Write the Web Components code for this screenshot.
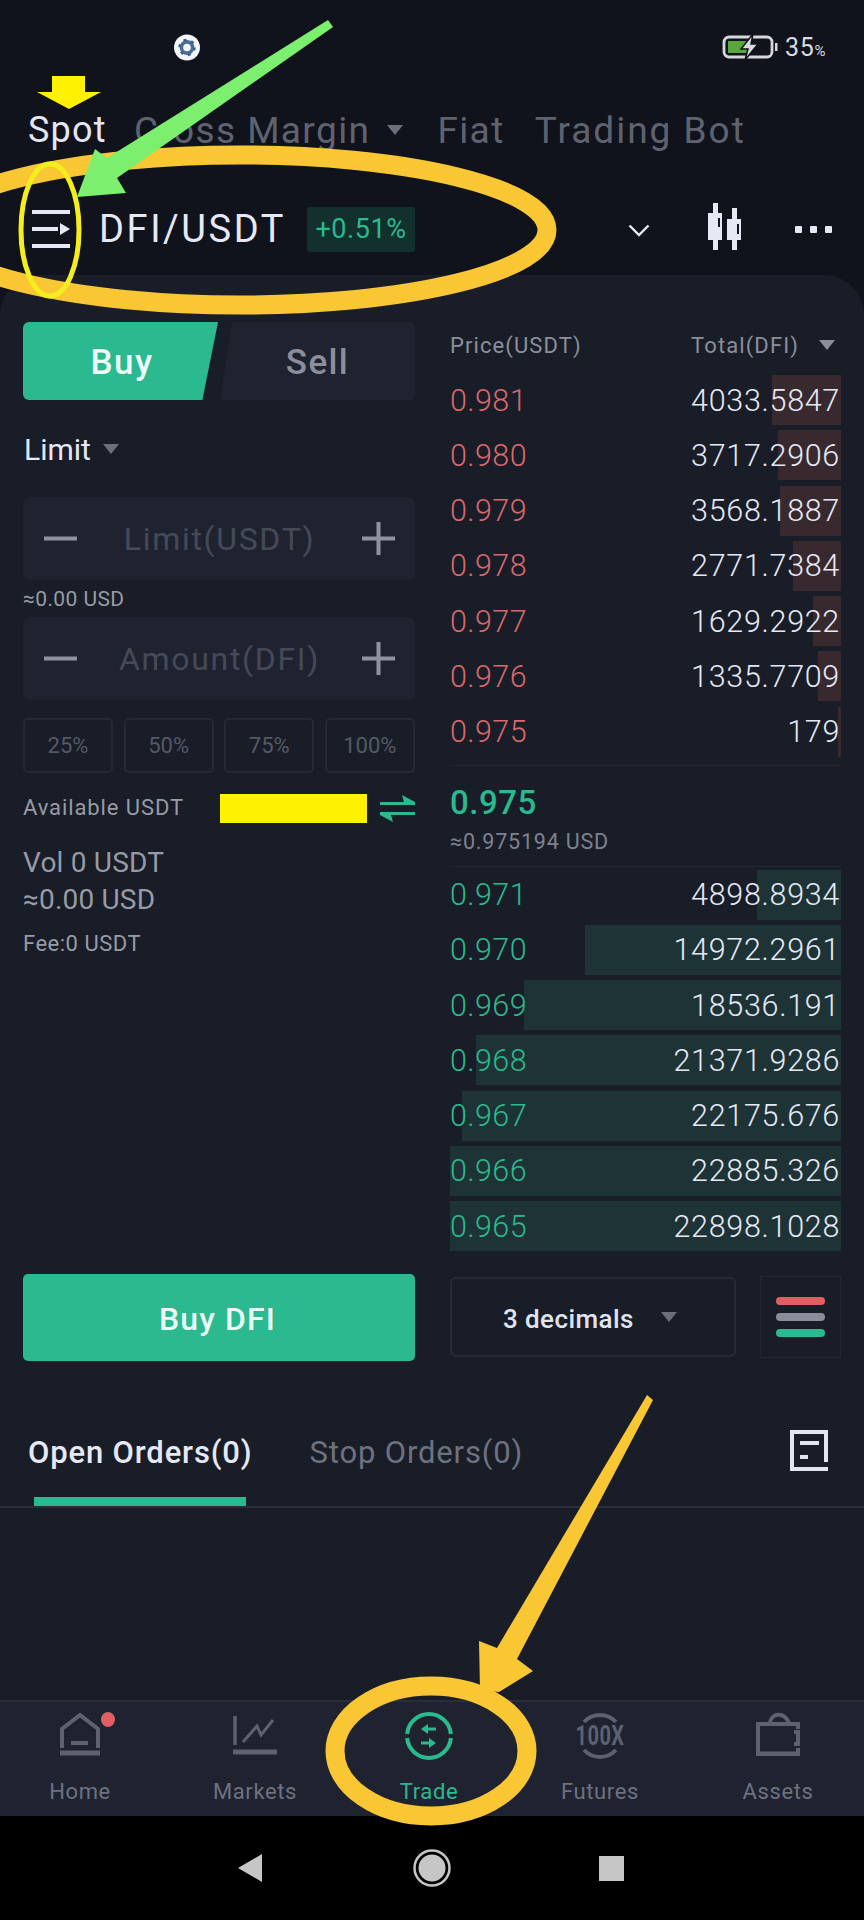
<!DOCTYPE html>
<html>
<head>
<meta charset="utf-8">
<title>Trade</title>
<style>
    html, body { margin: 0; padding: 0; background: #10131c; }
    body { width: 864px; height: 1920px; position: relative; overflow: hidden; font-family: Roboto, "Liberation Sans", sans-serif; }
    #app { display: flex; flex-direction: column; height: 1920px; }
</style>
</head>
<body>
<div id="app">
    <status-bar></status-bar>
    <market-tabs></market-tabs>
    <pair-header></pair-header>
    <trade-panel>
        <order-form slot="form"></order-form>
        <order-book slot="book"></order-book>
        <orders-tabs slot="orders"></orders-tabs>
    </trade-panel>
    <bottom-nav></bottom-nav>
    <system-nav></system-nav>
</div>
<note-layer></note-layer>

<script>
class StatusBar extends HTMLElement {
    constructor() {
        super();
        this.attachShadow({ mode: "open" });
        this.shadowRoot.innerHTML = `
        <style>
            :host { display: flex; align-items: center; height: 94px; padding: 0 38px 0 174px; box-sizing: border-box; color: #d9dbe0; flex: none; }
            .spacer { flex: 1; }
            .pct { font-size: 25px; margin-left: 6px; letter-spacing: 0.6px; }
            .pct small { font-size: 15px; }
            svg { display: block; }
        </style>
        <svg width="26" height="27" viewBox="0 0 26 27">
            <circle cx="13" cy="13.5" r="13" fill="#f4f6fa"/>
            <circle cx="13" cy="13.5" r="5.6" fill="none" stroke="#4a6f96" stroke-width="3.6"/>
            <circle cx="13" cy="13.5" r="7.6" fill="none" stroke="#3d5f85" stroke-width="2.2" stroke-dasharray="3 5"/>
        </svg>
        <div class="spacer"></div>
        <svg width="57" height="26" viewBox="0 0 57 26">
            <rect x="2" y="3" width="48" height="20" rx="5" fill="none" stroke="#d5d7da" stroke-width="2.8"/>
            <rect x="6" y="7" width="21" height="12" fill="#58a83a"/>
            <path d="M31 0 L19 15 H26 L23 26 L36 10 H29 Z" fill="#d9dbde" stroke="#10131c" stroke-width="1.5"/>
            <rect x="53" y="9" width="2.5" height="8" fill="#d5d7da"/>
        </svg>
        <div class="pct">35<small>%</small></div>
        `;
    }
}
customElements.define("status-bar", StatusBar);

class MarketTabs extends HTMLElement {
    constructor() {
        super();
        this.attachShadow({ mode: "open" });
        this.shadowRoot.innerHTML = `
        <style>
            :host { display: flex; align-items: center; height: 72px; padding-left: 28px; font-size: 37px; color: #5f6371; flex: none; white-space: nowrap; letter-spacing: 1.4px; }
            .on { color: #e4e7f1; width: 106px; font-size: 36px; letter-spacing: 1.2px; }
            .caret { width: 0; height: 0; border: 8px solid transparent; border-top: 10px solid #6b6f7c; border-bottom: 0; margin: 0 34px 0 17px; }
            .bot { margin-left: 30px; letter-spacing: 2px; }
        </style>
        <span class="on">Spot</span><span>Cross Margin</span><span class="caret"></span><span>Fiat</span><span class="bot">Trading Bot</span>
        `;
    }
}
customElements.define("market-tabs", MarketTabs);

class PairHeader extends HTMLElement {
    constructor() {
        super();
        this.attachShadow({ mode: "open" });
        this.shadowRoot.innerHTML = `
        <style>
            :host { display: flex; align-items: center; height: 109px; padding: 17px 32px 0 32px; box-sizing: border-box; color: #e6e9f5; flex: none; }
            .pair { font-size: 38px; margin-left: 29px; letter-spacing: 2.6px; }
            .badge { margin-left: 21px; width: 108px; height: 45px; background: #12302e; color: #2bb98f; font-size: 27px; letter-spacing: 0.6px; border-radius: 3px; display: flex; align-items: center; justify-content: center; }
            .spacer { flex: 1; }
            .dots { display: flex; gap: 8px; margin-left: 54px; }
            .dots i { width: 7px; height: 7px; background: #e6e9f5; border-radius: 1px; }
            svg { display: block; }
        </style>
        <svg width="38" height="40" viewBox="0 0 38 40" fill="#e6e9f5" style="margin-top:2px">
            <rect x="0" y="0" width="38" height="4"/>
            <rect x="0" y="17" width="26" height="4"/>
            <path d="M28 13 L38 19 L28 25 Z"/>
            <rect x="0" y="34" width="38" height="4"/>
        </svg>
        <div class="pair">DFI/USDT</div>
        <div class="badge">+0.51%</div>
        <div class="spacer"></div>
        <svg width="22" height="13" viewBox="0 0 22 13" style="margin-right:57px;margin-top:3px">
            <path d="M1.5 1.5 L11 11 L20.5 1.5" fill="none" stroke="#e6e9f5" stroke-width="2.4"/>
        </svg>
        <svg width="34" height="48" viewBox="0 0 34 48" fill="#e6e9f5" style="margin-bottom:5px">
            <rect x="6" y="0" width="5" height="47"/>
            <rect x="25" y="5" width="5" height="42"/>
            <path d="M1 10 H15 V37 H1 Z M6 15 V28 H10 V24 H13 V15 Z" fill-rule="evenodd"/>
            <path d="M20 16 H34 V37 H20 Z M25 21 V28 H29 V31 H32 V21 Z" fill-rule="evenodd"/>
        </svg>
        <div class="dots"><i></i><i></i><i></i></div>
        `;
    }
}
customElements.define("pair-header", PairHeader);

class TradePanel extends HTMLElement {
    constructor() {
        super();
        this.attachShadow({ mode: "open" });
        this.shadowRoot.innerHTML = `
        <style>
            :host { display: flex; flex-direction: column; height: 1425px; background: #191d28; border-radius: 40px 40px 0 0; flex: none; }
            .cols { display: grid; grid-template-columns: 392px 391px; gap: 35px; padding: 47px 23px 0; height: 1039px; }
        </style>
        <div class="cols">
            <slot name="form"></slot>
            <slot name="book"></slot>
        </div>
        <slot name="orders"></slot>
        `;
    }
}
customElements.define("trade-panel", TradePanel);

class StepInput extends HTMLElement {
    constructor() {
        super();
        this.attachShadow({ mode: "open" });
        this.shadowRoot.innerHTML = `
        <style>
            :host { display: flex; align-items: center; justify-content: space-between; height: 83px; background: #1f2330; border-radius: 7px; padding: 0 20px 0 21px; box-sizing: border-box; }
            .ph { font-size: 32px; color: #454a58; letter-spacing: 1.7px; }
            svg { display: block; }
        </style>
        <svg width="33" height="33" viewBox="0 0 33 33"><rect x="0" y="14.5" width="33" height="4" fill="#8f92a0"/></svg>
        <span class="ph"><slot></slot></span>
        <svg width="33" height="33" viewBox="0 0 33 33" fill="#8f92a0"><rect x="0" y="14.5" width="33" height="4"/><rect x="14.5" y="0" width="4" height="33"/></svg>
        `;
    }
}
customElements.define("step-input", StepInput);

class OrderForm extends HTMLElement {
    constructor() {
        super();
        this.attachShadow({ mode: "open" });
        this.shadowRoot.innerHTML = `
        <style>
            :host { display: flex; flex-direction: column; height: 100%; color: #979ba6; }
            .side { display: grid; grid-template-columns: 195px 195px; grid-template-rows: 78px; gap: 2px; height: 78px; font-size: 35px; text-align: center; letter-spacing: 1.4px; }
            .side div { display: flex; align-items: center; justify-content: center; padding-top: 3px; box-sizing: border-box; }
            .side .buy { background: #2bb98f; color: #eefaf6; border-radius: 6px 0 0 6px; clip-path: polygon(0 0, 100% 0, 92% 100%, 0 100%); padding-left: 3px; font-weight: 500; }
            .side .sell { background: #1f2330; color: #8b8f9b; border-radius: 0 6px 6px 0; clip-path: polygon(12px 0, 100% 0, 100% 100%, 0 100%); font-weight: 500; }
            .type { display: flex; align-items: center; height: 40px; margin-top: 29px; margin-bottom: 28px; padding-left: 1px; font-size: 30px; color: #e6e9f5; }
            .caret { width: 0; height: 0; border: 8px solid transparent; border-top: 10px solid #6b6f7c; border-bottom: 0; margin-left: 12px; }
            .usd { font-size: 21px; height: 37px; line-height: 39px; letter-spacing: 0.4px; }
            .pcts { display: grid; grid-template-columns: repeat(4, 90px); gap: 10.6px; margin-top: 18px; }
            .pcts div { height: 55px; box-sizing: border-box; border: 2px solid #252935; border-radius: 5px; font-size: 22px; color: #545966; display: flex; align-items: center; justify-content: center; }
            .avail { display: flex; align-items: center; height: 30px; margin-top: 20px; font-size: 22px; letter-spacing: 0.9px; line-height: 28px; }
            .spacer { flex: 1; }
            .mask { width: 147px; height: 29px; background: #fff200; margin-right: 13px; }
            .vol { font-size: 28px; line-height: 37px; margin-top: 21px; letter-spacing: 0.2px; }
            .fee { font-size: 22px; line-height: 30px; margin-top: 11px; letter-spacing: 0.5px; }
            .submit { margin-top: auto; height: 87px; background: #2bb98f; border-radius: 5px; color: #eafaf5; font-size: 32px; font-weight: 500; letter-spacing: 1.1px; display: flex; align-items: center; justify-content: center; padding: 3px 3px 0 0; box-sizing: border-box; }
            svg { display: block; }
        </style>
        <div class="side"><div class="buy">Buy</div><div class="sell">Sell</div></div>
        <div class="type">Limit<span class="caret"></span></div>
        <step-input>Limit(USDT)</step-input>
        <div class="usd">≈0.00 USD</div>
        <step-input>Amount(DFI)</step-input>
        <div class="pcts"><div>25%</div><div>50%</div><div>75%</div><div>100%</div></div>
        <div class="avail">Available USDT<span class="spacer"></span><span class="mask"></span>
            <svg width="35" height="28" viewBox="0 0 35 28" fill="#2bb98f">
                <path d="M0 8 H35 V11 H0 Z M22 1 L35 8 H24 Z"/>
                <path d="M0 18 H35 V21 H0 Z M13 28 L0 21 H11 Z"/>
            </svg>
        </div>
        <div class="vol">Vol 0 USDT<br>≈0.00 USD</div>
        <div class="fee">Fee:0 USDT</div>
        <div class="submit">Buy DFI</div>
        `;
    }
}
customElements.define("order-form", OrderForm);

class BookRow extends HTMLElement {
    constructor() {
        super();
        this.attachShadow({ mode: "open" });
    }
    connectedCallback() {
        const ask = this.getAttribute("side") === "ask";
        const bar = this.getAttribute("bar");
        const barColor = ask ? "#38292f" : "#1e3336";
        const priceColor = ask ? "#d9686c" : "#2bb98f";
        this.shadowRoot.innerHTML = `
        <style>
            :host { display: flex; align-items: center; justify-content: space-between; height: 50px; font-size: 30.5px; padding-right: 1px;
                background: linear-gradient(to left, ${barColor} ${bar}px, transparent ${bar}px); }
            .price { color: ${priceColor}; font-weight: 300; letter-spacing: 0.4px; }
            .total { color: #e6e9f5; font-weight: 300; letter-spacing: 0.7px; }
        </style>
        <span class="price">${this.getAttribute("price")}</span>
        <span class="total">${this.getAttribute("total")}</span>
        `;
    }
}
customElements.define("book-row", BookRow);

const asks = [
    ["0.981", "4033.5847", 69], ["0.980", "3717.2906", 63], ["0.979", "3568.1887", 61],
    ["0.978", "2771.7384", 48], ["0.977", "1629.2922", 28], ["0.976", "1335.7709", 23], ["0.975", "179", 3],
];
const bids = [
    ["0.971", "4898.8934", 84], ["0.970", "14972.2961", 256], ["0.969", "18536.191", 317],
    ["0.968", "21371.9286", 365], ["0.967", "22175.676", 379], ["0.966", "22885.326", 391], ["0.965", "22898.1028", 391],
];
const rowHtml = (list, side) => list.map((r) => `<book-row side="${side}" price="${r[0]}" total="${r[1]}" bar="${r[2]}"></book-row>`).join("");

class OrderBook extends HTMLElement {
    constructor() {
        super();
        this.attachShadow({ mode: "open" });
        this.shadowRoot.innerHTML = `
        <style>
            :host { display: flex; flex-direction: column; height: 100%; }
            .head { display: flex; align-items: center; height: 46px; font-size: 22px; color: #8b8f9b; letter-spacing: 1.1px; margin-bottom: 7px; }
            .spacer { flex: 1; }
            .caret { width: 0; height: 0; border: 8px solid transparent; border-top: 10px solid #8b8f9b; border-bottom: 0; margin: 0 6px 0 20px; }
            .rows { display: flex; flex-direction: column; gap: 5.25px; }
            .line { height: 1px; background: #232733; }
            .last { margin-top: 8px; }
            .now { font-size: 33px; font-weight: 500; color: #2bb98f; line-height: 42px; margin-top: 16px; letter-spacing: 0.5px; }
            .usd { font-size: 21.5px; color: #7e828e; line-height: 30px; margin-top: 3px; margin-bottom: 9px; letter-spacing: 0.8px; }
            .tools { display: grid; grid-template-columns: 286px 81px; justify-content: space-between; margin-top: 26px; }
            .sel { height: 80px; box-sizing: border-box; border: 2px solid #262a36; border-radius: 6px; display: flex; align-items: center; padding: 3px 0 0 51px; font-size: 26px; color: #e0e4f0; font-weight: 500; letter-spacing: 0.4px; }
            .sel .caret { border-top-color: #6b6f7c; margin: 0 0 3px 27px; }
            .tog { height: 82px; margin-top: -1px; box-sizing: border-box; border: 1px solid #232733; display: flex; flex-direction: column; align-items: center; justify-content: center; gap: 8px; }
            .tog i { width: 49px; height: 8px; border-radius: 4px; }
        </style>
        <div class="head"><span>Price(USDT)</span><span class="spacer"></span><span>Total(DFI)</span><span class="caret"></span></div>
        <div class="rows">${rowHtml(asks, "ask")}</div>
        <div class="line last"></div>
        <div class="now">0.975</div>
        <div class="usd">≈0.975194 USD</div>
        <div class="line"></div>
        <div class="rows" style="margin-top:3px">${rowHtml(bids, "bid")}</div>
        <div class="tools">
            <div class="sel">3 decimals<span class="caret"></span></div>
            <div class="tog"><i style="background:#e05f64"></i><i style="background:#8b8e9a"></i><i style="background:#2bb98f"></i></div>
        </div>
        `;
    }
}
customElements.define("order-book", OrderBook);

class OrdersTabs extends HTMLElement {
    constructor() {
        super();
        this.attachShadow({ mode: "open" });
        this.shadowRoot.innerHTML = `
        <style>
            :host { display: flex; align-items: flex-end; height: 147px; padding: 0 36px 0 28px; border-bottom: 2px solid #2a2e39; box-sizing: border-box; flex: none; font-size: 31px; color: #6d7180; letter-spacing: 0.85px; }
            .tab { display: flex; flex-direction: column; }
            .tab span { line-height: 40px; }
            .tab i { height: 9px; margin: 24px 6px 0; }
            .on { color: #e6e9f5; font-weight: 500; margin-right: 57px; }
            .on i { background: #2bb98f; }
            .spacer { flex: 1; }
            svg { display: block; margin-bottom: 35px; }
        </style>
        <div class="tab on"><span>Open Orders(0)</span><i></i></div>
        <div class="tab"><span>Stop Orders(0)</span><i></i></div>
        <div class="spacer"></div>
        <svg width="38" height="41" viewBox="0 0 38 41" fill="none" stroke="#e2e6f0" stroke-width="4">
            <path d="M2 39 V2 H36 V32"/>
            <path d="M0 39 H38"/>
            <path d="M10 13 H29"/>
            <path d="M10 27 H18"/>
        </svg>
        `;
    }
}
customElements.define("orders-tabs", OrdersTabs);

class NavItem extends HTMLElement {
    constructor() {
        super();
        this.attachShadow({ mode: "open" });
        this.shadowRoot.innerHTML = `
        <style>
            :host { display: flex; flex-direction: column; align-items: center; font-size: 22px; color: #6d7180; letter-spacing: 0.6px; }
            :host([active]) { color: #2bb98f; }
            .icon { height: 54px; display: flex; align-items: flex-end; }
            .label { line-height: 26px; margin-top: 23px; }
        </style>
        <div class="icon"><slot name="icon"></slot></div>
        <div class="label"><slot></slot></div>
        `;
    }
}
customElements.define("nav-item", NavItem);

class BottomNav extends HTMLElement {
    constructor() {
        super();
        this.attachShadow({ mode: "open" });
        this.shadowRoot.innerHTML = `
        <style>
            :host { display: grid; grid-template-columns: 160px 190px 158px 184px 172px; height: 116px; background: #1f2330; border-top: 2px solid #2a2e3a; box-sizing: border-box; flex: none; position: relative; }
            .dot { position: absolute; left: 101px; top: 10px; width: 14px; height: 15px; border-radius: 50%; background: #e05f64; }
            svg { display: block; }
            .tall { margin-bottom: -4px; }
            text { font-family: Roboto, sans-serif; }
        </style>
        <nav-item>
            <svg slot="icon" width="42" height="44" viewBox="0 0 42 44" fill="none" stroke="#5d6170" stroke-width="4">
                <path d="M3 36 V17 L21 3 L39 17 V36"/><path d="M1 41 H41" stroke-width="5"/><path d="M12 31 H29"/>
            </svg>Home
        </nav-item>
        <nav-item>
            <svg slot="icon" width="44" height="40" viewBox="0 0 44 40" fill="none" stroke="#5d6170">
                <path d="M2 0 V29" stroke-width="3.5"/><path d="M10 26 L24 10 L28 19 L40 4" stroke-width="3"/><path d="M0 36 H44" stroke-width="5"/>
            </svg>Markets
        </nav-item>
        <nav-item active>
            <svg slot="icon" class="tall" width="48" height="48" viewBox="0 0 48 48" fill="none" stroke="#2bb98f" stroke-width="4">
                <path d="M2.1 22 A22 22 0 0 1 45.9 22"/><path d="M2.1 26 A22 22 0 0 0 45.9 26"/>
                <path d="M31 17 H22" stroke-width="3"/><path d="M23 12 L16 17 L23 22 Z" fill="#2bb98f" stroke="none"/>
                <path d="M16 31 H25" stroke-width="3"/><path d="M24 26 L31 31 L24 36 Z" fill="#2bb98f" stroke="none"/>
            </svg>Trade
        </nav-item>
        <nav-item>
            <svg slot="icon" class="tall" width="72" height="48" viewBox="-12 0 72 48" fill="none" stroke="#5d6170" stroke-width="4">
                <path d="M8 10 A22 22 0 0 1 40 10"/><path d="M8 38 A22 22 0 0 0 40 38"/>
                <text transform="translate(24 33) scale(0.74 1)" text-anchor="middle" font-size="27" font-weight="700" fill="#5d6170" stroke="none">100X</text>
            </svg>Futures
        </nav-item>
        <nav-item>
            <svg slot="icon" width="44" height="44" viewBox="0 0 44 44" fill="none" stroke="#5d6170" stroke-width="4">
                <path d="M42 17 V12 H2 V42 H42 V36" /><path d="M1 42 H44" stroke-width="5"/><path d="M14 11 C15 1 28 -1 33 11"/><path d="M38 20 H42 V32 H38"/>
            </svg>Assets
        </nav-item>
        <span class="dot"></span>
        `;
    }
}
customElements.define("bottom-nav", BottomNav);

class SystemNav extends HTMLElement {
    constructor() {
        super();
        this.attachShadow({ mode: "open" });
        this.shadowRoot.innerHTML = `
        <style>
            :host { display: flex; align-items: center; height: 104px; background: #000; padding: 0 0 0 238px; box-sizing: border-box; flex: none; }
            svg { display: block; }
        </style>
        <svg width="24" height="28" viewBox="0 0 24 28" style="margin-right:151px"><path d="M24 0 V28 L0 14 Z" fill="#c6c6c6"/></svg>
        <svg width="38" height="38" viewBox="0 0 38 38" style="margin-right:148px"><circle cx="19" cy="19" r="17.5" fill="none" stroke="#c6c6c6" stroke-width="2.5"/><circle cx="19" cy="19" r="13.5" fill="#c6c6c6"/></svg>
        <svg width="25" height="25" viewBox="0 0 25 25"><rect width="25" height="25" fill="#c6c6c6"/></svg>
        `;
    }
}
customElements.define("system-nav", SystemNav);

// hand drawn marks on top of the screenshot
class NoteLayer extends HTMLElement {
    constructor() {
        super();
        this.attachShadow({ mode: "open" });
        this.shadowRoot.innerHTML = `
        <style>
            :host { position: absolute; left: 0; top: 0; width: 864px; height: 1920px; pointer-events: none; }
            svg { display: block; }
        </style>
        <svg width="864" height="1920" viewBox="0 0 864 1920">
            <path d="M52 76 H85 V92 H101 L69 109 L37 92 H52 Z" fill="#fff200"/>
            <ellipse cx="240" cy="230" rx="307" ry="75" fill="none" stroke="#f9c733" stroke-width="19"/>
            <ellipse cx="50" cy="230" rx="29" ry="66" fill="none" stroke="#f4ee1e" stroke-width="5"/>
            <path d="M77 197 L95 149 L107 158 L328 20 L333 27 L117 178 L126 193 Z" fill="#7cf06e"/>
            <ellipse cx="431" cy="1751" rx="96" ry="65" fill="none" stroke="#f9c733" stroke-width="19"/>
            <path d="M479 1641 L497 1648 L647 1395 L653 1400 L517 1659 L533 1671 L499 1692 L480 1690 Z" fill="#f9c733"/>
        </svg>
        `;
    }
}
customElements.define("note-layer", NoteLayer);
</script>
</body>
</html>
